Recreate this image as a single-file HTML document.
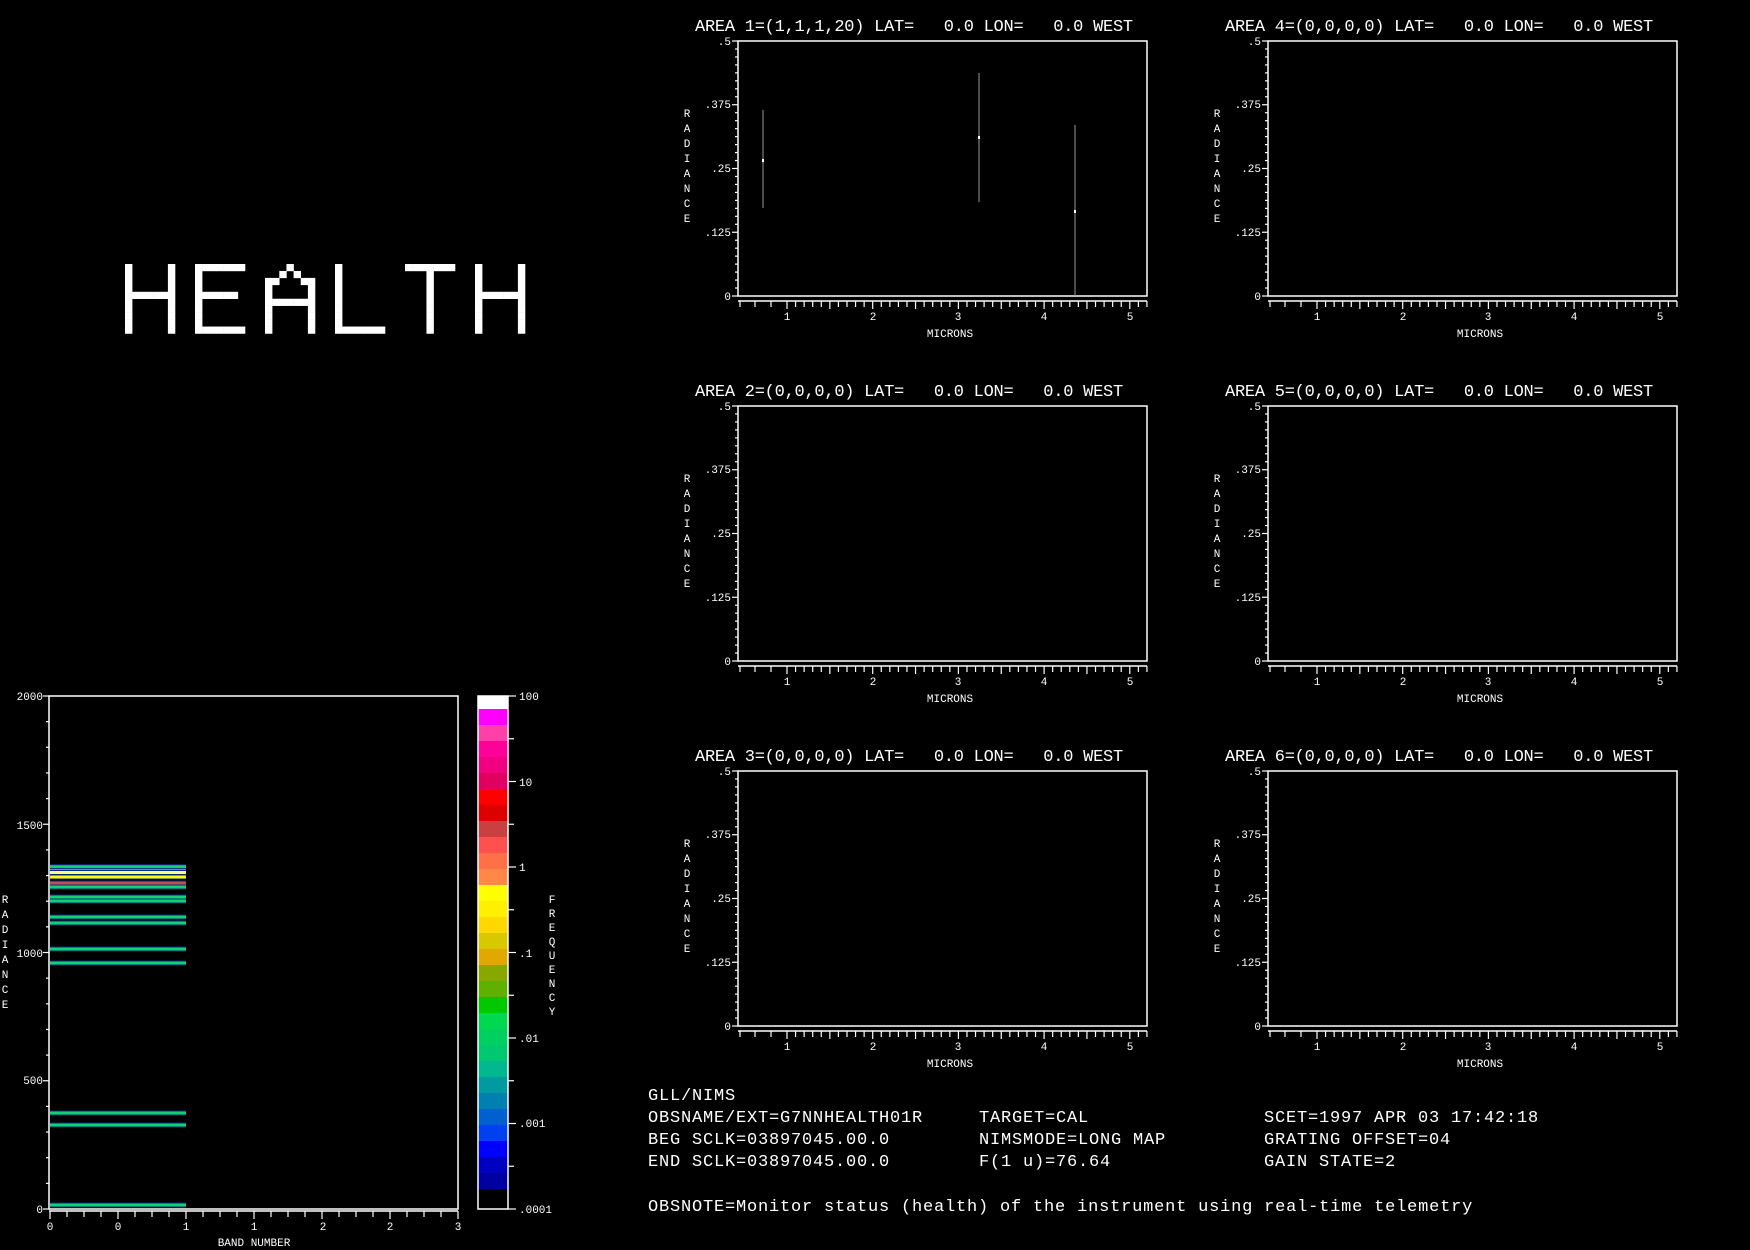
<!DOCTYPE html>
<html><head><meta charset="utf-8">
<style>
html,body{margin:0;padding:0;background:#000;}
body{width:1750px;height:1250px;overflow:hidden;position:relative;}
svg{position:absolute;left:0;top:0;}
text{font-family:"Liberation Mono","DejaVu Sans Mono",monospace;fill:#fff;}
.t{font-size:17px;letter-spacing:-0.25px;}
.s{font-size:11px;}
.b{font-size:17px;letter-spacing:0.8px;}
</style></head><body>
<svg id="sv" width="1750" height="1250" viewBox="0 0 1750 1250" xmlns="http://www.w3.org/2000/svg">
<g id="g"></g>
<g fill="#fff" id="health"></g>

<text class="t" x="695" y="31" xml:space="preserve">AREA 1=(1,1,1,20) LAT=   0.0 LON=   0.0 WEST</text>
<text class="t" x="1225" y="31" xml:space="preserve">AREA 4=(0,0,0,0) LAT=   0.0 LON=   0.0 WEST</text>
<text class="t" x="695" y="396" xml:space="preserve">AREA 2=(0,0,0,0) LAT=   0.0 LON=   0.0 WEST</text>
<text class="t" x="1225" y="396" xml:space="preserve">AREA 5=(0,0,0,0) LAT=   0.0 LON=   0.0 WEST</text>
<text class="t" x="695" y="761" xml:space="preserve">AREA 3=(0,0,0,0) LAT=   0.0 LON=   0.0 WEST</text>
<text class="t" x="1225" y="761" xml:space="preserve">AREA 6=(0,0,0,0) LAT=   0.0 LON=   0.0 WEST</text>

<g transform="translate(0,0)">
<text class="s" x="731" y="45" text-anchor="end">.5</text><text class="s" x="731" y="108" text-anchor="end">.375</text><text class="s" x="731" y="172" text-anchor="end">.25</text><text class="s" x="731" y="236" text-anchor="end">.125</text><text class="s" x="731" y="300" text-anchor="end">0</text>
<text class="s" x="787" y="320" text-anchor="middle">1</text><text class="s" x="873" y="320" text-anchor="middle">2</text><text class="s" x="958" y="320" text-anchor="middle">3</text><text class="s" x="1044" y="320" text-anchor="middle">4</text><text class="s" x="1130" y="320" text-anchor="middle">5</text>
<text class="s" x="950" y="337" text-anchor="middle">MICRONS</text>
<text class="s" x="687" text-anchor="middle"><tspan x="687" y="117">R</tspan><tspan x="687" y="132">A</tspan><tspan x="687" y="147">D</tspan><tspan x="687" y="162">I</tspan><tspan x="687" y="177">A</tspan><tspan x="687" y="192">N</tspan><tspan x="687" y="207">C</tspan><tspan x="687" y="222">E</tspan></text>
</g>
<g transform="translate(530,0)">
<text class="s" x="731" y="45" text-anchor="end">.5</text><text class="s" x="731" y="108" text-anchor="end">.375</text><text class="s" x="731" y="172" text-anchor="end">.25</text><text class="s" x="731" y="236" text-anchor="end">.125</text><text class="s" x="731" y="300" text-anchor="end">0</text>
<text class="s" x="787" y="320" text-anchor="middle">1</text><text class="s" x="873" y="320" text-anchor="middle">2</text><text class="s" x="958" y="320" text-anchor="middle">3</text><text class="s" x="1044" y="320" text-anchor="middle">4</text><text class="s" x="1130" y="320" text-anchor="middle">5</text>
<text class="s" x="950" y="337" text-anchor="middle">MICRONS</text>
<text class="s" x="687" text-anchor="middle"><tspan x="687" y="117">R</tspan><tspan x="687" y="132">A</tspan><tspan x="687" y="147">D</tspan><tspan x="687" y="162">I</tspan><tspan x="687" y="177">A</tspan><tspan x="687" y="192">N</tspan><tspan x="687" y="207">C</tspan><tspan x="687" y="222">E</tspan></text>
</g>
<g transform="translate(0,365)">
<text class="s" x="731" y="45" text-anchor="end">.5</text><text class="s" x="731" y="108" text-anchor="end">.375</text><text class="s" x="731" y="172" text-anchor="end">.25</text><text class="s" x="731" y="236" text-anchor="end">.125</text><text class="s" x="731" y="300" text-anchor="end">0</text>
<text class="s" x="787" y="320" text-anchor="middle">1</text><text class="s" x="873" y="320" text-anchor="middle">2</text><text class="s" x="958" y="320" text-anchor="middle">3</text><text class="s" x="1044" y="320" text-anchor="middle">4</text><text class="s" x="1130" y="320" text-anchor="middle">5</text>
<text class="s" x="950" y="337" text-anchor="middle">MICRONS</text>
<text class="s" x="687" text-anchor="middle"><tspan x="687" y="117">R</tspan><tspan x="687" y="132">A</tspan><tspan x="687" y="147">D</tspan><tspan x="687" y="162">I</tspan><tspan x="687" y="177">A</tspan><tspan x="687" y="192">N</tspan><tspan x="687" y="207">C</tspan><tspan x="687" y="222">E</tspan></text>
</g>
<g transform="translate(530,365)">
<text class="s" x="731" y="45" text-anchor="end">.5</text><text class="s" x="731" y="108" text-anchor="end">.375</text><text class="s" x="731" y="172" text-anchor="end">.25</text><text class="s" x="731" y="236" text-anchor="end">.125</text><text class="s" x="731" y="300" text-anchor="end">0</text>
<text class="s" x="787" y="320" text-anchor="middle">1</text><text class="s" x="873" y="320" text-anchor="middle">2</text><text class="s" x="958" y="320" text-anchor="middle">3</text><text class="s" x="1044" y="320" text-anchor="middle">4</text><text class="s" x="1130" y="320" text-anchor="middle">5</text>
<text class="s" x="950" y="337" text-anchor="middle">MICRONS</text>
<text class="s" x="687" text-anchor="middle"><tspan x="687" y="117">R</tspan><tspan x="687" y="132">A</tspan><tspan x="687" y="147">D</tspan><tspan x="687" y="162">I</tspan><tspan x="687" y="177">A</tspan><tspan x="687" y="192">N</tspan><tspan x="687" y="207">C</tspan><tspan x="687" y="222">E</tspan></text>
</g>
<g transform="translate(0,730)">
<text class="s" x="731" y="45" text-anchor="end">.5</text><text class="s" x="731" y="108" text-anchor="end">.375</text><text class="s" x="731" y="172" text-anchor="end">.25</text><text class="s" x="731" y="236" text-anchor="end">.125</text><text class="s" x="731" y="300" text-anchor="end">0</text>
<text class="s" x="787" y="320" text-anchor="middle">1</text><text class="s" x="873" y="320" text-anchor="middle">2</text><text class="s" x="958" y="320" text-anchor="middle">3</text><text class="s" x="1044" y="320" text-anchor="middle">4</text><text class="s" x="1130" y="320" text-anchor="middle">5</text>
<text class="s" x="950" y="337" text-anchor="middle">MICRONS</text>
<text class="s" x="687" text-anchor="middle"><tspan x="687" y="117">R</tspan><tspan x="687" y="132">A</tspan><tspan x="687" y="147">D</tspan><tspan x="687" y="162">I</tspan><tspan x="687" y="177">A</tspan><tspan x="687" y="192">N</tspan><tspan x="687" y="207">C</tspan><tspan x="687" y="222">E</tspan></text>
</g>
<g transform="translate(530,730)">
<text class="s" x="731" y="45" text-anchor="end">.5</text><text class="s" x="731" y="108" text-anchor="end">.375</text><text class="s" x="731" y="172" text-anchor="end">.25</text><text class="s" x="731" y="236" text-anchor="end">.125</text><text class="s" x="731" y="300" text-anchor="end">0</text>
<text class="s" x="787" y="320" text-anchor="middle">1</text><text class="s" x="873" y="320" text-anchor="middle">2</text><text class="s" x="958" y="320" text-anchor="middle">3</text><text class="s" x="1044" y="320" text-anchor="middle">4</text><text class="s" x="1130" y="320" text-anchor="middle">5</text>
<text class="s" x="950" y="337" text-anchor="middle">MICRONS</text>
<text class="s" x="687" text-anchor="middle"><tspan x="687" y="117">R</tspan><tspan x="687" y="132">A</tspan><tspan x="687" y="147">D</tspan><tspan x="687" y="162">I</tspan><tspan x="687" y="177">A</tspan><tspan x="687" y="192">N</tspan><tspan x="687" y="207">C</tspan><tspan x="687" y="222">E</tspan></text>
</g>

<text class="s" x="43" y="700" text-anchor="end">2000</text>
<text class="s" x="43" y="829" text-anchor="end">1500</text>
<text class="s" x="43" y="957" text-anchor="end">1000</text>
<text class="s" x="43" y="1084" text-anchor="end">500</text>
<text class="s" x="43" y="1213" text-anchor="end">0</text>
<text class="s" text-anchor="middle"><tspan x="5" y="903">R</tspan><tspan x="5" y="918">A</tspan><tspan x="5" y="933">D</tspan><tspan x="5" y="948">I</tspan><tspan x="5" y="963">A</tspan><tspan x="5" y="978">N</tspan><tspan x="5" y="993">C</tspan><tspan x="5" y="1008">E</tspan></text>
<text class="s" x="50" y="1230" text-anchor="middle">0</text><text class="s" x="118" y="1230" text-anchor="middle">0</text><text class="s" x="186" y="1230" text-anchor="middle">1</text><text class="s" x="254" y="1230" text-anchor="middle">1</text><text class="s" x="323" y="1230" text-anchor="middle">2</text><text class="s" x="390" y="1230" text-anchor="middle">2</text><text class="s" x="458" y="1230" text-anchor="middle">3</text>
<text class="s" x="254" y="1246" text-anchor="middle">BAND NUMBER</text>
<text class="s" x="519" y="700">100</text>
<text class="s" x="519" y="786">10</text>
<text class="s" x="519" y="871">1</text>
<text class="s" x="519" y="957">.1</text>
<text class="s" x="519" y="1042">.01</text>
<text class="s" x="519" y="1127">.001</text>
<text class="s" x="519" y="1213">.0001</text>
<text class="s" text-anchor="middle"><tspan x="552" y="903">F</tspan><tspan x="552" y="917">R</tspan><tspan x="552" y="931">E</tspan><tspan x="552" y="945">Q</tspan><tspan x="552" y="959">U</tspan><tspan x="552" y="973">E</tspan><tspan x="552" y="987">N</tspan><tspan x="552" y="1001">C</tspan><tspan x="552" y="1015">Y</tspan></text>

<text class="b" x="648" y="1100">GLL/NIMS</text>
<text class="b" x="648" y="1122">OBSNAME/EXT=G7NNHEALTH01R</text>
<text class="b" x="979" y="1122">TARGET=CAL</text>
<text class="b" x="1264" y="1122">SCET=1997 APR 03 17:42:18</text>
<text class="b" x="648" y="1144">BEG SCLK=03897045.00.0</text>
<text class="b" x="979" y="1144">NIMSMODE=LONG MAP</text>
<text class="b" x="1264" y="1144">GRATING OFFSET=04</text>
<text class="b" x="648" y="1166">END SCLK=03897045.00.0</text>
<text class="b" x="979" y="1166">F(1 u)=76.64</text>
<text class="b" x="1264" y="1166">GAIN STATE=2</text>
<text class="b" x="648" y="1211">OBSNOTE=Monitor status (health) of the instrument using real-time telemetry</text>
</svg>
<script>
var NS="http://www.w3.org/2000/svg",g=document.getElementById('g');
function el(n,a){var e=document.createElementNS(NS,n);for(var k in a)e.setAttribute(k,a[k]);g.appendChild(e);return e;}
function ln(x1,y1,x2,y2,c,w){el('line',{x1:x1,y1:y1,x2:x2,y2:y2,stroke:c||'#fff','stroke-width':w||1.5});}
function rc(x,y,w,h,c){el('rect',{x:x,y:y,width:w,height:h,fill:c});}
for(var r=0;r<3;r++)for(var c=0;c<2;c++){
 var dx=c*530,dy=r*365,L=738+dx,T=41+dy,R=1147+dx,B=296+dy;
 el('rect',{x:L,y:T,width:R-L,height:B-T,fill:'none',stroke:'#fff','stroke-width':1.5});
 for(var i=0;i<=32;i++){var y=T+i*255/32;ln(L-(i%8==0?6:3),y,L,y,'#fff',1.2);}
 ln(L,B+5,R,B+5,'#fff',1.5);
 [740,755,771].forEach(function(x){ln(x+dx,B+5,x+dx,B+11,'#fff',1.2);});
 for(var m=10;m<=52;m++){var x=787+dx+(m-10)*8.57;ln(x,B+5,x,B+(m%5==0?13:11),'#fff',1.2);}
}
[[763,110,208,160],[979,73,202,137],[1075,125,296,211]].forEach(function(d){ln(d[0],d[1],d[0],d[2],'#999',1);rc(d[0]-1,d[3]-1,2,3,'#fff');});
el('rect',{x:49,y:696,width:409,height:513,fill:'none',stroke:'#fff','stroke-width':1.5});
for(var i=0;i<=20;i++){var y=696+i*513/20;ln(49-(i%5==0?6:3),y,49,y,'#fff',1.2);}
for(var i=0;i<=24;i++){var x=50+i*17;ln(x,1211,x,1217+(i%4==0?2:0),'#fff',1.2);}
ln(49,1211,458,1211,'#fff',1.5);
var hl=[[866.7,'#10d070'],[870.7,'#e0a000'],[872.5,'#ffff80'],[877,'#ffff00'],[883,'#c05050'],[887,'#10d070'],[897,'#10d070'],[901,'#10d070'],[917,'#10d070'],[923,'#10d070'],[949,'#10d070'],[963,'#10d070'],[1113,'#10d070'],[1125,'#10d070'],[1205,'#10d070']];
hl.forEach(function(h){rc(50,h[0]-2.5,136,5,'#0a2a80');rc(50,h[0]-1.5,136,3,h[1]);});
var cols=['#ff00ff','#ff40a8','#ff0098','#f00080','#e00060','#ff0000','#dd0000','#c84040','#ff5050','#ff7048','#ff8848','#ffff00','#fff000','#ffd800','#d8c800','#e0a800','#88a800','#60b000','#00c800','#00d850','#00d060','#00c870','#00b890','#009aa0','#0080b0','#0060d0','#0040f0','#0000ff','#0000c0','#0000a0'];
rc(478,696,30,13,'#fff');
cols.forEach(function(c,i){rc(478,709+i*16,30,16.2,c);});
el('rect',{x:478,y:696,width:30,height:513,fill:'none',stroke:'#fff','stroke-width':1.5});
for(var i=0;i<=12;i++){var y=696+i*513/12;ln(508,y,i%2==0?516:514,y,'#fff',1.2);}
var H=document.getElementById('health');
var L7={H:["X.....X","X.....X","X.....X","X.....X","XXXXXXX","X.....X","X.....X","X.....X","X.....X","X.....X"],
E:["XXXXXXX","X......","X......","X......","XXXXXX.","X......","X......","X......","X......","XXXXXXX"],
A:["...X...","..X.X..","XX...XX","X.....X","X.....X","XXXXXXX","X.....X","X.....X","X.....X","X.....X"],
L:["X......","X......","X......","X......","X......","X......","X......","X......","X......","XXXXXXX"],
T:["XXXXXXX","...X...","...X...","...X...","...X...","...X...","...X...","...X...","...X...","...X..."]};
"HEALTH".split('').forEach(function(ch,k){var m=L7[ch];for(var r=0;r<10;r++)for(var c=0;c<7;c++)if(m[r][c]=='X'){var e=document.createElementNS(NS,'rect');e.setAttribute('x',125+k*70+c*7.15);e.setAttribute('y',264+r*6.95);e.setAttribute('width',7.4);e.setAttribute('height',7.2);H.appendChild(e);}});
</script>
</body></html>
